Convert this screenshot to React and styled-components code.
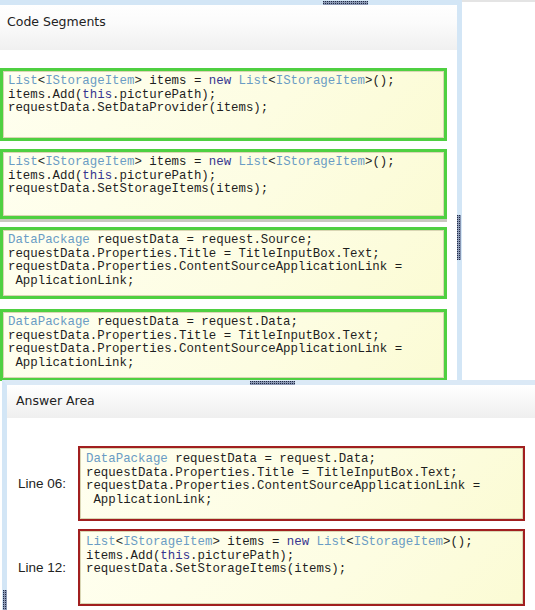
import React from 'react'
import styled, { createGlobalStyle } from 'styled-components'

const GlobalStyle = createGlobalStyle`
  html, body {
    margin: 0;
    padding: 0;
    background: #fff;
  }
`

const T = ({ children }) => <TypeName>{children}</TypeName>
const K = ({ children }) => <Keyword>{children}</Keyword>

const segmentA = (
  <>
    <T>List</T>&lt;<T>IStorageItem</T>&gt; items = <K>new</K> <T>List</T>&lt;<T>IStorageItem</T>&gt;();{'\n'}
    items.Add(<K>this</K>.picturePath);{'\n'}
    requestData.SetDataProvider(items);
  </>
)

const segmentB = (
  <>
    <T>List</T>&lt;<T>IStorageItem</T>&gt; items = <K>new</K> <T>List</T>&lt;<T>IStorageItem</T>&gt;();{'\n'}
    items.Add(<K>this</K>.picturePath);{'\n'}
    requestData.SetStorageItems(items);
  </>
)

const segmentC = (
  <>
    <T>DataPackage</T> requestData = request.Source;{'\n'}
    requestData.Properties.Title = TitleInputBox.Text;{'\n'}
    requestData.Properties.ContentSourceApplicationLink ={'\n'}
    {' '}ApplicationLink;
  </>
)

const segmentD = (
  <>
    <T>DataPackage</T> requestData = request.Data;{'\n'}
    requestData.Properties.Title = TitleInputBox.Text;{'\n'}
    requestData.Properties.ContentSourceApplicationLink ={'\n'}
    {' '}ApplicationLink;
  </>
)

const App = () => {
  return (
    <>
      <GlobalStyle />
      <Page>
        <TopRow>
          <SegmentsPanel>
            <Grip $dir="h" style={{ top: -4, left: 323 }} />
            <Grip $dir="v" style={{ top: 210, right: -4 }} />
            <PanelHeader>Code Segments</PanelHeader>
            <SegmentList>
              <CodeBox $tone="green" $h={73}>{segmentA}</CodeBox>
              <CodeBox $tone="green" $h={70} $shadow>{segmentB}</CodeBox>
              <CodeBox $tone="green" $h={72} $gap={10}>{segmentC}</CodeBox>
              <CodeBox $tone="green" $h={72}>{segmentD}</CodeBox>
            </SegmentList>
          </SegmentsPanel>
          <SideBlank />
        </TopRow>
        <AnswerPanel>
          <Grip $dir="h" style={{ top: -4, left: 243 }} />
          <Grip $dir="v" style={{ bottom: 0, left: -4, height: 20 }} />
          <AnswerHeader>Answer Area</AnswerHeader>
          <AnswerBody>
            <AnswerRow>
              <LineLabel>Line 06:</LineLabel>
              <CodeBox $tone="red" $h={75}>{segmentD}</CodeBox>
            </AnswerRow>
            <AnswerRow>
              <LineLabel>Line 12:</LineLabel>
              <CodeBox $tone="red" $h={77}>{segmentB}</CodeBox>
            </AnswerRow>
          </AnswerBody>
        </AnswerPanel>
      </Page>
    </>
  )
}

export default App

const Page = styled.div`
  width: 535px;
  height: 610px;
  overflow: hidden;
  display: flex;
  flex-direction: column;
  background: #fff;
`

const TopRow = styled.div`
  display: flex;
  height: 380px;
`

const SegmentsPanel = styled.section`
  position: relative;
  width: 457px;
  border-top: 5px solid #d3e6f6;
  border-right: 5px solid #d3e6f6;
  background: #fff;
`

const SideBlank = styled.div`
  flex: 1;
  border-top: 2px solid #e4e4e4;
`

const Grip = styled.div`
  position: absolute;
  z-index: 2;
  width: ${p => (p.$dir === 'h' ? '45px' : '4px')};
  height: ${p => (p.$dir === 'h' ? '4px' : '45px')};
  background-color: #8a98b4;
  background-image:
    linear-gradient(90deg, transparent 50%, #8a98b4 50%),
    linear-gradient(0deg, #8a98b4 50%, #1f2a45 50%);
  background-size: 2px 2px;
`

const PanelHeader = styled.div`
  height: 45px;
  padding: 9px 0 0 7px;
  box-sizing: border-box;
  font-family: 'DejaVu Sans', Verdana, sans-serif;
  font-size: 12.5px;
  color: #222;
  background: linear-gradient(#ffffff 0%, #fbfbfb 40%, #f0f0f0 100%);
`

const SegmentList = styled.div`
  display: flex;
  flex-direction: column;
  padding: 18px 10px 0 0;
`

const CodeBox = styled.pre`
  margin: 0 0 ${p => (p.$gap ?? 8)}px;
  height: ${p => p.$h}px;
  box-sizing: border-box;
  flex: 0 0 auto;
  padding: 4px 5px;
  border: ${p => (p.$tone === 'green' ? '3px solid #4fd041' : '2px solid #a11f1f')};
  box-shadow: inset 0 0 0 1px #d9d6b4${p => (p.$shadow ? ', 0 3px 0 #c9c9c0' : '')};
  background: linear-gradient(135deg, #fffff0 0%, #fdfde2 60%, #fbfbd4 100%);
  font-family: 'Liberation Mono', 'Courier New', monospace;
  font-size: 12.4px;
  line-height: 13.5px;
  color: #1e1e1e;
  white-space: pre;
  overflow: hidden;

  &:last-child {
    margin-bottom: 0;
  }
`

const TypeName = styled.span`
  color: #6a9cc4;
`

const Keyword = styled.span`
  color: #35358f;
`

const AnswerPanel = styled.section`
  position: relative;
  flex: 1;
  margin-left: 2px;
  border-left: 5px solid #d3e6f6;
  border-top: 5px solid #dbe9f6;
  display: flex;
  flex-direction: column;
`

const AnswerHeader = styled.div`
  height: 33px;
  padding: 8px 0 0 9px;
  box-sizing: border-box;
  font-family: 'DejaVu Sans', Verdana, sans-serif;
  font-size: 12.5px;
  color: #222;
  background: linear-gradient(#ffffff 0%, #f7f7f7 50%, #efefef 100%);
`

const AnswerBody = styled.div`
  display: flex;
  flex-direction: column;
  gap: 8px;
  padding: 28px 10px 0 11px;
`

const AnswerRow = styled.div`
  display: flex;
  align-items: center;

  & > pre {
    flex: 1;
    margin: 0;
    padding: 5px 6px;
  }
`

const LineLabel = styled.div`
  width: 60px;
  flex: 0 0 60px;
  font-family: 'Liberation Sans', Arial, sans-serif;
  font-size: 13.5px;
  color: #222;
`
